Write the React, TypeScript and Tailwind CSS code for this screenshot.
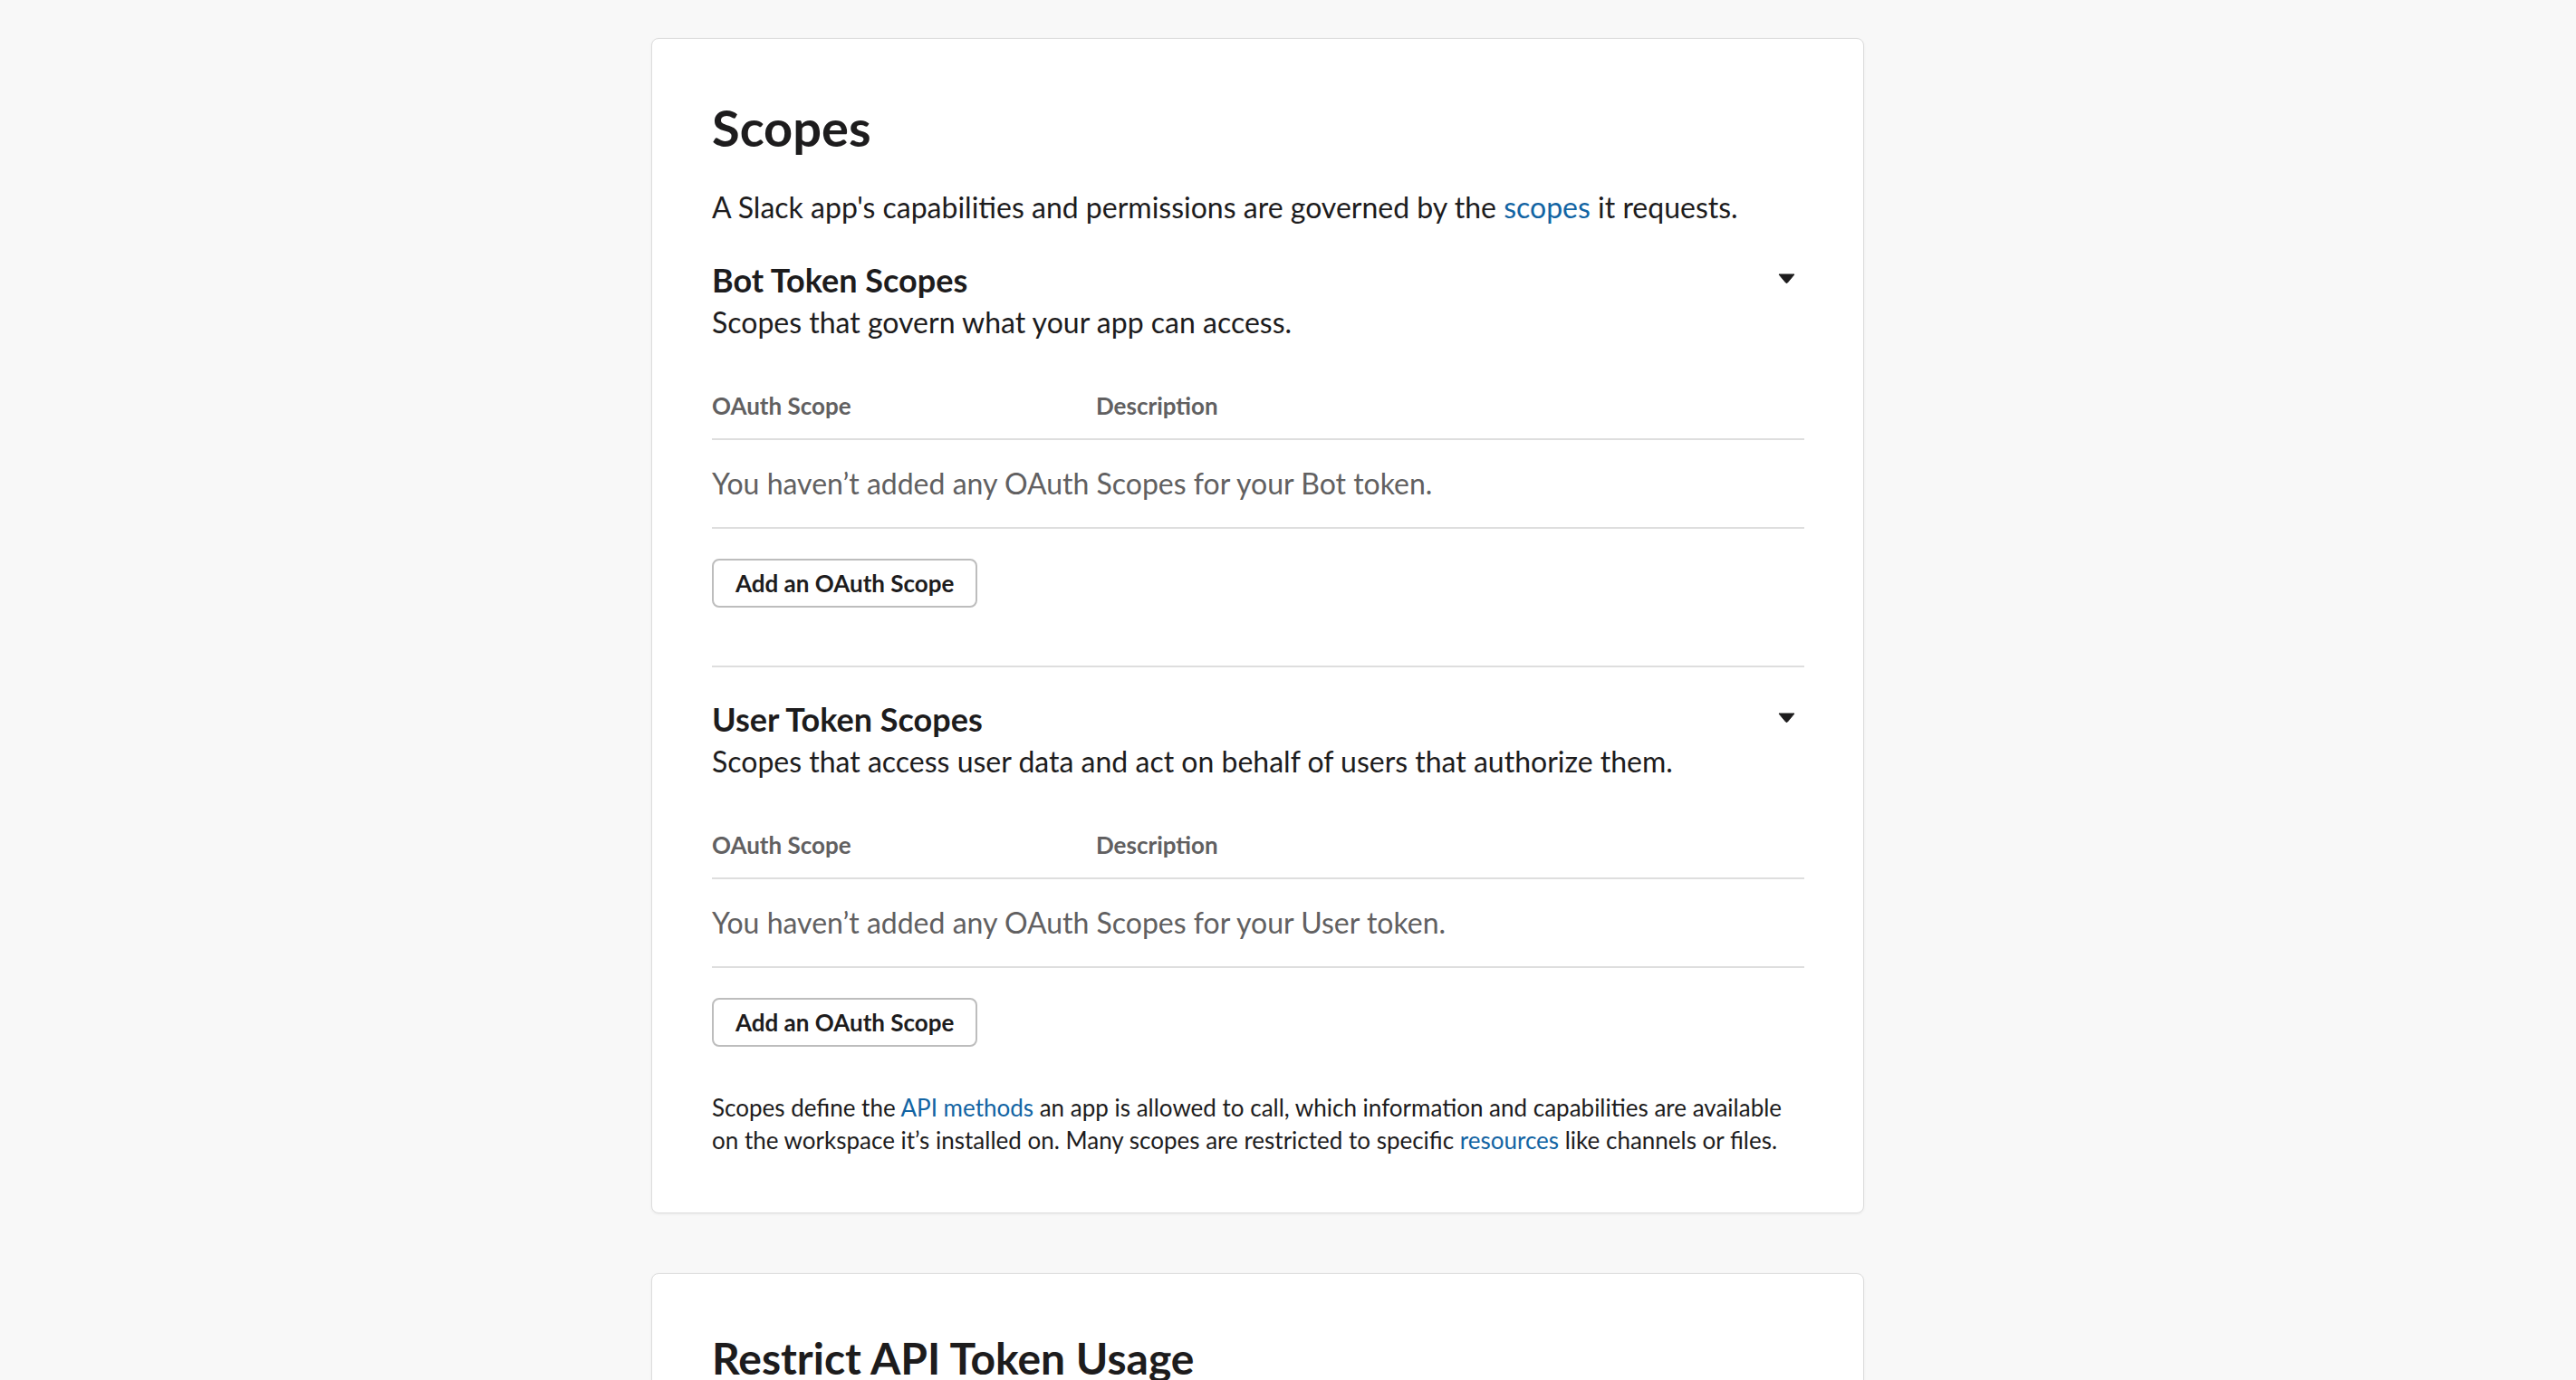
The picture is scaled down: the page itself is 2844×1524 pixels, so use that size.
import React from "react";

function Caret() {
  return (
    <svg width="19" height="11" viewBox="0 0 19 11" className="mt-[15px] mr-[10px] shrink-0">
      <path d="M1 1 H18 L10.5 10 Q9.5 11 8.5 10 Z" fill="#1d1c1d" stroke="#1d1c1d" strokeWidth="1" strokeLinejoin="round" />
    </svg>
  );
}

function ScopeSection({
  title,
  subtitle,
  emptyText,
  first,
}: {
  title: string;
  subtitle: string;
  emptyText: string;
  first?: boolean;
}) {
  return (
    <div className={first ? "mt-[38px]" : "border-t-2 border-[#dedede] pt-[35px]"}>
      <div className="flex items-start justify-between">
        <div>
          <h3 className="text-[36px] leading-[44px] font-bold">{title}</h3>
          <p className="mt-[5px] text-[32px] leading-[40px]">{subtitle}</p>
        </div>
        <Caret />
      </div>
      {/* table */}
      <div className="mt-[56px]">
        <div className="flex border-b-2 border-[#dedede] pb-[20px] text-[26px] leading-[32px] font-bold text-[#616061]">
          <div className="w-[424px]">OAuth Scope</div>
          <div>Description</div>
        </div>
        <div className="border-b-2 border-[#dedede] pt-[28px] pb-[28px] text-[32px] leading-[40px] text-[#616061]">
          {emptyText}
        </div>
      </div>
      <button className="mt-[33px] h-[54px] rounded-[8px] border-2 border-[#bdbdbd] bg-white px-[24px] text-[26px] font-bold text-[#1d1c1d]">
        Add an OAuth Scope
      </button>
      {first && <div className="h-[64px]" />}
    </div>
  );
}

export default function App() {
  return (
    <div
      className="min-h-screen bg-[#f8f8f8] pt-[42px] text-[#1d1c1d]"
      style={{ fontFamily: "Lato, 'Noto Sans', 'Liberation Sans', sans-serif" }}
    >
      <div className="ml-[719px] w-[1339px]">
        {/* Scopes card */}
        <div className="rounded-[8px] border border-[#dddddd] bg-white pt-[66px] pb-[62px] pl-[66px] pr-[65px] shadow-[0_1px_3px_rgba(0,0,0,0.06)]">
          <h2 className="text-[56px] leading-[64px] font-bold">Scopes</h2>
          <p className="mt-[36px] text-[32px] leading-[40px]">
            A Slack app's capabilities and permissions are governed by the{" "}
            <a className="text-[#1264a3]">scopes</a> it requests.
          </p>

          <ScopeSection
            first
            title="Bot Token Scopes"
            subtitle="Scopes that govern what your app can access."
            emptyText="You haven’t added any OAuth Scopes for your Bot token."
          />
          <ScopeSection
            title="User Token Scopes"
            subtitle="Scopes that access user data and act on behalf of users that authorize them."
            emptyText="You haven’t added any OAuth Scopes for your User token."
          />

          <p className="mt-[49px] text-[26px] leading-[36px]">
            Scopes define the <a className="text-[#1264a3]">API methods</a> an app is allowed to call, which
            information and capabilities are available
            <br />
            on the workspace it’s installed on. Many scopes are restricted to specific{" "}
            <a className="text-[#1264a3]">resources</a> like channels or files.
          </p>
        </div>

        {/* Restrict API Token Usage card */}
        <div className="mt-[66px] rounded-[8px] border border-[#dddddd] bg-white pt-[61px] pb-[62px] pl-[66px] pr-[65px] shadow-[0_1px_3px_rgba(0,0,0,0.06)]">
          <h2 className="text-[48px] leading-[64px] font-bold">Restrict API Token Usage</h2>
          <p className="mt-[36px] text-[32px] leading-[40px]">
            Requests to the Slack API with your app’s tokens can be limited to IP address ranges you specify.
          </p>
        </div>
      </div>
    </div>
  );
}
